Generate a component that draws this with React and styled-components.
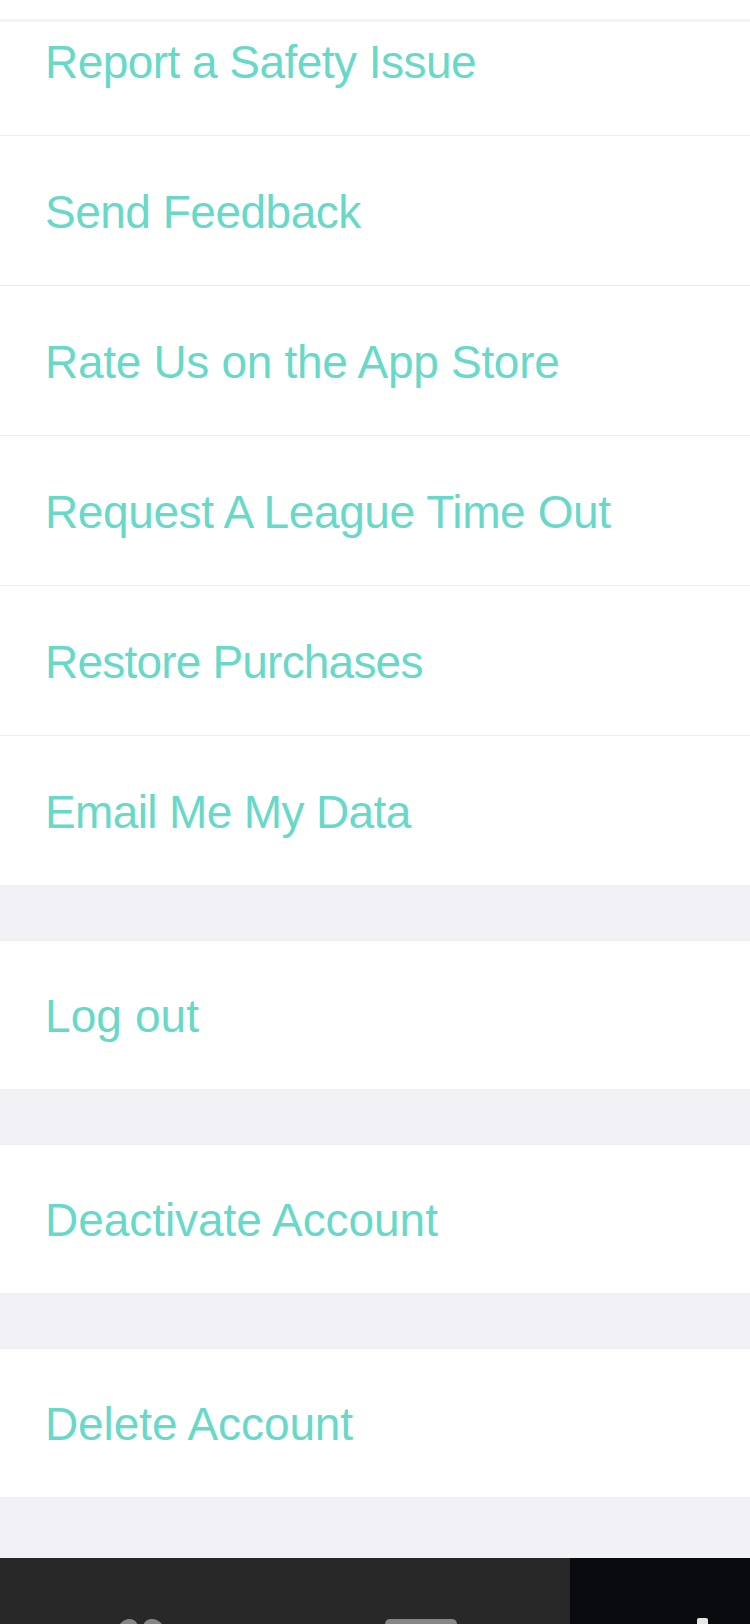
import React from 'react';
import styled, { createGlobalStyle } from 'styled-components';

const GlobalStyle = createGlobalStyle`
  body {
    margin: 0;
    background-color: #f2f1f6;
    font-family: 'Liberation Sans', Helvetica, Arial, sans-serif;
  }
`;

const Screen = styled.div`
  display: flex;
  flex-direction: column;
  width: 750px;
  height: 1624px;
  overflow: hidden;
  background-color: #f2f1f6;
`;

const Header = styled.header`
  flex: none;
  height: 19px;
  background-color: #ffffff;
  border-bottom: 3px solid #f3f3f3;
`;

const Settings = styled.main`
  flex: 1;
  min-height: 0;
  display: flex;
  flex-direction: column;
  justify-content: flex-end;
  gap: 54px;
  padding-bottom: 60px;
  overflow: hidden;
`;

const Group = styled.section`
  flex: none;
  display: flex;
  flex-direction: column;
  background-color: #ffffff;
  border-top: 1px solid #efefef;
`;

const Row = styled.button`
  display: flex;
  align-items: center;
  box-sizing: border-box;
  height: ${props => (props.$single ? '149px' : '150px')};
  padding: ${props => (props.$single ? '1px' : '2px')} 45px 0 45px;
  border: none;
  border-bottom: 1px solid #efefef;
  background: none;
  color: #68d9c8;
  font-family: inherit;
  font-size: 46px;
  text-align: left;
  white-space: nowrap;
`;

const Label = styled.span`
  letter-spacing: ${props => props.$spacing || 0}px;
`;

const TabBar = styled.nav`
  flex: none;
  display: grid;
  grid-template-columns: 285px 285px 180px;
  height: 66px;
`;

const Tab = styled.div`
  display: flex;
  align-items: flex-end;
  overflow: hidden;
  background-color: ${props => (props.$active ? '#0a0b0f' : '#282828')};
  color: ${props => (props.$active ? '#e6e6e6' : '#868686')};

  svg {
    display: block;
  }
`;

const groups = [
  [
    { label: 'Report a Safety Issue', spacing: -0.54 },
    { label: 'Send Feedback', spacing: -0.5 },
    { label: 'Rate Us on the App Store', spacing: -0.3 },
    { label: 'Request A League Time Out', spacing: -0.39 },
    { label: 'Restore Purchases', spacing: -0.8 },
    { label: 'Email Me My Data', spacing: -0.63 },
  ],
  [{ label: 'Log out', spacing: 0.1 }],
  [{ label: 'Deactivate Account', spacing: -0.05 }],
  [{ label: 'Delete Account', spacing: -0.1 }],
];

const HeartIcon = () => (
  <svg width="285" height="10" viewBox="0 0 285 10" fill="currentColor">
    <path d="M119.5 10.5 C122.5 6.5 126 5 129.5 5 C133 5 136 6.5 137.5 10.5 Z" />
    <path d="M143.5 10.5 C145 6.5 148.5 5 152 5 C156 5 159 6.5 162.5 10.5 Z" />
  </svg>
);

const CardIcon = () => (
  <svg width="285" height="10" viewBox="0 0 285 10" fill="currentColor">
    <rect x="100" y="5" width="72" height="30" rx="5" />
  </svg>
);

const PlusIcon = () => (
  <svg width="180" height="10" viewBox="0 0 180 10" fill="currentColor">
    <rect x="127" y="4" width="11" height="30" rx="2" />
  </svg>
);

const App = () => {
  return (
    <>
      <GlobalStyle />
      <Screen>
        <Header />
        <Settings>
          {groups.map(items => (
            <Group key={items[0].label}>
              {items.map(item => (
                <Row key={item.label} $single={items.length === 1}>
                  <Label $spacing={item.spacing}>{item.label}</Label>
                </Row>
              ))}
            </Group>
          ))}
        </Settings>
        <TabBar>
          <Tab><HeartIcon /></Tab>
          <Tab><CardIcon /></Tab>
          <Tab $active><PlusIcon /></Tab>
        </TabBar>
      </Screen>
    </>
  );
};

export default App;
